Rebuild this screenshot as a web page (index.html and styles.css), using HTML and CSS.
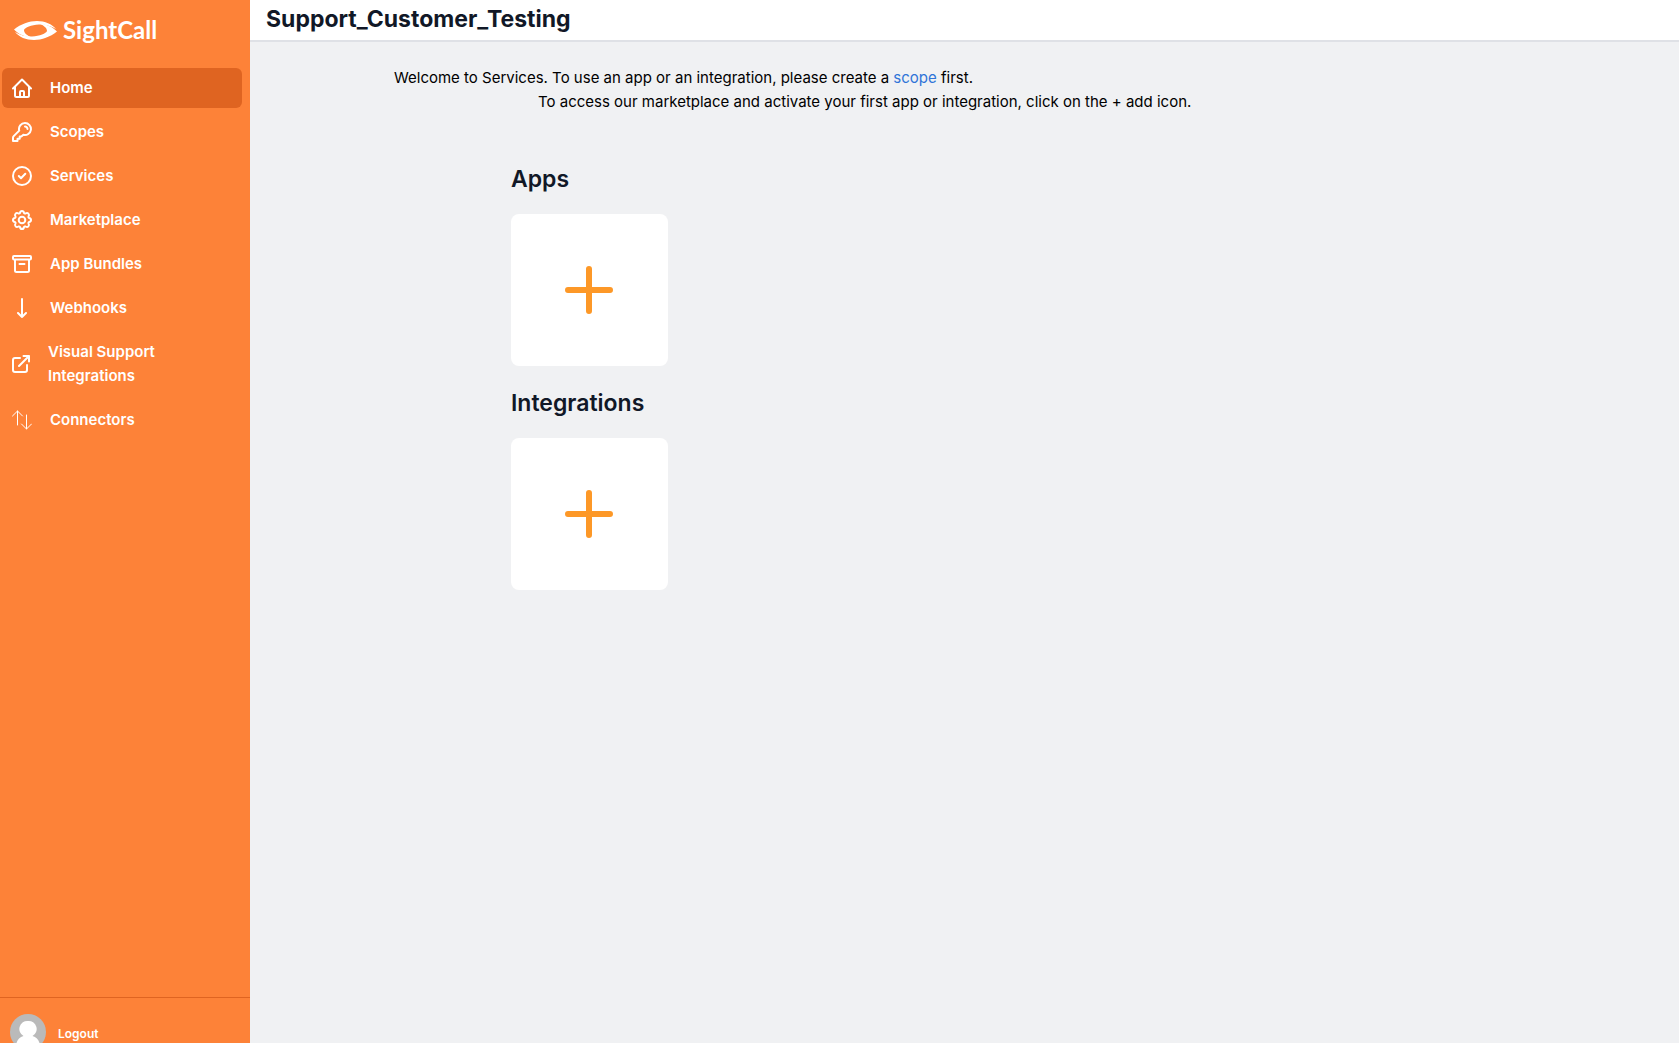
FILE: index.html
```
<!DOCTYPE html>
<html lang="en">
<head>
    <meta charset="UTF-8">
    <meta name="viewport" content="width=device-width, initial-scale=1">
    <title>Support_Customer_Testing</title>
    <link rel="stylesheet" href="styles.css">
</head>
<body>
    <div class="app">
        <aside class="sidebar">
            <div class="sidebar-main">
                <a class="logo" href="#">
                    <svg width="43" height="19" viewBox="0 0 43 19" fill="currentColor">
                        <path d="M0 8.500 C7 3 15 0 23 0 C31 0 38 3 42 8 C36 4.500 30 3 25 3.500 C17 4 11 6.500 10 9 C10 12 13 14.500 18 16.500 C11 16 4 13 0 8.500 Z"/>
                        <path d="M43 10.500 C36 16 28 19 20 19 C12 19 5 16 1 11 C7 14.500 13 16 18 15.500 C26 15 32 12.500 33 10 C33 7 30 4.500 25 2.500 C32 3 39 6 43 10.500 Z"/>
                    </svg>
                    <span>SightCall</span>
                </a>
                <nav class="nav">
                    <a class="nav-item active" href="#">
                        <svg class="icon" viewBox="0 0 20 20"><path d="M1 10.500 L10 1.500 L19 10.500 M3 9 V17.500 Q3 19 4.500 19 H15.500 Q17 19 17 17.500 V9 M8 19 V14 Q8 13 9 13 H11 Q12 13 12 14 V19"/></svg>
                        <span>Home</span>
                    </a>
                    <a class="nav-item" href="#">
                        <svg class="icon" viewBox="0 0 20 20"><path d="M13 1 A6 6 0 0 0 7.200 8.600 L1.700 14.100 Q1 14.800 1 15.800 V19 H5.500 V16.800 H7.700 V14.600 H9.300 L11.400 12.800 A6 6 0 1 0 13 1 Z M13 4.500 A2.500 2.500 0 0 1 15.500 7"/></svg>
                        <span>Scopes</span>
                    </a>
                    <a class="nav-item" href="#">
                        <svg class="icon" viewBox="0 0 20 20"><circle cx="10" cy="10" r="9"/><path d="M6.800 10 L9 12.200 L13.300 7.800"/></svg>
                        <span>Services</span>
                    </a>
                    <a class="nav-item" href="#">
                        <svg class="icon" viewBox="0 0 20 20"><path d="M8 3 Q8.300 1 10 1 Q11.700 1 12 3 Q12.500 3.800 13.500 3.500 Q15.200 2.400 16.400 3.600 Q17.600 4.800 16.500 6.500 Q16.200 7.500 17 8 Q19 8.300 19 10 Q19 11.700 17 12 Q16.200 12.500 16.500 13.500 Q17.600 15.200 16.400 16.400 Q15.200 17.600 13.500 16.500 Q12.500 16.200 12 17 Q11.700 19 10 19 Q8.300 19 8 17 Q7.500 16.200 6.500 16.500 Q4.800 17.600 3.600 16.400 Q2.400 15.200 3.500 13.500 Q3.800 12.500 3 12 Q1 11.700 1 10 Q1 8.300 3 8 Q3.800 7.500 3.500 6.500 Q2.400 4.800 3.600 3.600 Q4.800 2.400 6.500 3.500 Q7.500 3.800 8 3 Z"/><circle cx="10" cy="10" r="3.300"/></svg>
                        <span>Marketplace</span>
                    </a>
                    <a class="nav-item" href="#">
                        <svg class="icon" viewBox="0 0 20 20"><rect x="1" y="2" width="18" height="3.500" rx="1"/><path d="M3 6 V16.500 Q3 18 4.500 18 H15.500 Q17 18 17 16.500 V6 M7.500 10 H12.500"/></svg>
                        <span>App Bundles</span>
                    </a>
                    <a class="nav-item" href="#">
                        <svg class="icon" viewBox="0 0 20 20"><path d="M10 1 V19 M6 15 L10 19 L14 15"/></svg>
                        <span>Webhooks</span>
                    </a>
                    <a class="nav-item external" href="#">
                        <svg class="icon" viewBox="0 0 18 18"><path d="M8 3 H3 Q1 3 1 5 V15 Q1 17 3 17 H13 Q15 17 15 15 V10 M11.500 1 H17 V6.500 M17 1 L7 11"/></svg>
                        <span>Visual Support Integrations</span>
                    </a>
                    <a class="nav-item" href="#">
                        <svg class="icon thin" viewBox="0 0 20 20"><path d="M5.500 15 V1 M.500 6 L5.500 1 L10.500 6 M14.500 5 V19 M9.500 14 L14.500 19 L19.500 14"/></svg>
                        <span>Connectors</span>
                    </a>
                </nav>
            </div>
            <div class="account">
                <svg class="avatar" viewBox="0 0 36 36">
                    <circle cx="18" cy="18" r="18" fill="#bababa"/>
                    <path d="M18 7 A8 8 0 0 1 22.500 22 Q29 24 30 31.400 A18 18 0 0 1 6 31.400 Q7 24 13.500 22 A8 8 0 0 1 18 7 Z" fill="#fff"/>
                </svg>
                <a class="logout" href="#">Logout</a>
            </div>
        </aside>
        <main class="main">
            <header class="topbar">
                <h1>Support_Customer_Testing</h1>
            </header>
            <div class="intro">
                <p>Welcome to Services. To use an app or an integration, please create a <a href="#">scope</a> first.</p>
                <p class="indent">To access our marketplace and activate your first app or integration, click on the + add icon.</p>
            </div>
            <div class="sections">
                <section>
                    <h2>Apps</h2>
                    <button class="add-card" type="button" aria-label="Add app">
                        <svg viewBox="0 0 48 48"><path d="M24 3 V45 M3 24 H45"/></svg>
                    </button>
                </section>
                <section>
                    <h2>Integrations</h2>
                    <button class="add-card" type="button" aria-label="Add integration">
                        <svg viewBox="0 0 48 48"><path d="M24 3 V45 M3 24 H45"/></svg>
                    </button>
                </section>
            </div>
        </main>
    </div>
</body>
</html>
```
FILE: styles.css
```
* {
    box-sizing: border-box;
}
body {
    margin: 0;
    background-color: #f0f1f3;
    color: #000;
    font-family: Inter, "Liberation Sans", sans-serif;
    font-size: 15px;
    line-height: 24px;
}
h1, h2, p {
    margin: 0;
}
a {
    color: inherit;
    text-decoration: none;
}
.app {
    display: flex;
    height: 100vh;
    overflow: hidden;
}

/* sidebar */
.sidebar {
    flex: 0 0 250px;
    background-color: #fd8238;
    color: #fff;
}
.sidebar-main {
    height: calc(100vh - 46px);
}
.logo {
    display: flex;
    align-items: center;
    gap: 6px;
    height: 68px;
    padding: 0 14px 8px;
    font-family: Lato, sans-serif;
    font-size: 24px;
    font-weight: 700;
}
.nav {
    display: flex;
    flex-direction: column;
    gap: 4px;
    padding: 0 8px 0 2px;
}
.nav-item {
    display: flex;
    align-items: center;
    gap: 18px;
    padding: 8px 60px 8px 10px;
    border-radius: 6px;
    font-weight: 600;
}
.nav-item.active {
    background-color: #df6421;
}
.icon {
    flex: none;
    width: 20px;
    height: 20px;
    fill: none;
    stroke: currentColor;
    stroke-width: 2;
    stroke-linecap: round;
    stroke-linejoin: round;
}
.icon.thin {
    stroke-width: 1;
}
.external .icon {
    width: 18px;
    height: 18px;
}
.account {
    display: flex;
    align-items: center;
    gap: 12px;
    padding: 16px 10px;
    border-top: 1px solid #df6421;
}
.avatar {
    width: 36px;
    height: 36px;
}
.logout {
    padding-top: 4px;
    font-size: 12px;
    font-weight: 600;
}

/* content */
.main {
    flex: 1;
}
.topbar {
    height: 42px;
    padding: 3px 16px;
    background-color: #fff;
    border-bottom: 2px solid #dfe1e6;
}
h1, h2 {
    color: #111827;
    font-size: 23px;
    line-height: 32px;
}
h2 {
    font-weight: 600;
}
.intro {
    padding: 24px 0 0 144px;
}
.intro a {
    color: #2f74d8;
}
.indent {
    padding-left: 144px;
}
.sections {
    display: flex;
    flex-direction: column;
    gap: 20px;
    max-width: 907px;
    margin: 0 auto;
    padding-top: 49px;
}
.add-card {
    display: flex;
    align-items: center;
    justify-content: center;
    width: 157px;
    height: 152px;
    margin-top: 19px;
    padding: 0 1px 0 0;
    border: none;
    border-radius: 8px;
    background-color: #fff;
    cursor: pointer;
}
section + section {
    padding-top: 1px;
}
.add-card svg {
    width: 48px;
    height: 48px;
    fill: none;
    stroke: #fd9827;
    stroke-width: 6;
    stroke-linecap: round;
}
```
